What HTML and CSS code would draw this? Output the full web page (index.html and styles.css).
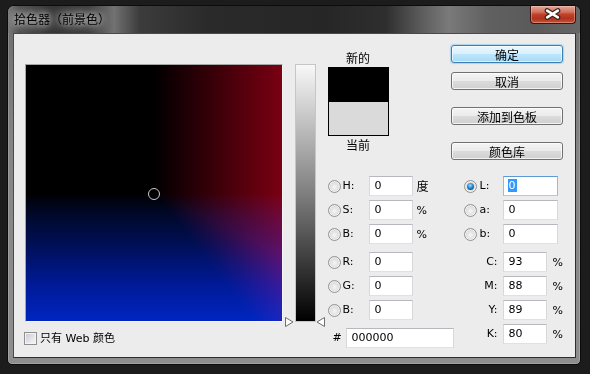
FILE: index.html
```html
<!DOCTYPE html>
<html lang="zh-CN">
<head>
<meta charset="utf-8">
<title>拾色器（前景色）</title>
<link rel="stylesheet" href="styles.css">
</head>
<body>
<div class="window">
  <div class="titlebar">
    <span class="title">拾色器（前景色）</span>
    <div class="close">
      <svg width="46" height="18" viewBox="0 0 46 18">
        <path d="M17.5 5.5 L28.5 12.5 M28.5 5.5 L17.5 12.5" stroke="#3a2220" stroke-width="5" stroke-linecap="round"/>
        <path d="M17.5 5.5 L28.5 12.5 M28.5 5.5 L17.5 12.5" stroke="#ffffff" stroke-width="2.6" stroke-linecap="round"/>
      </svg>
    </div>
  </div>
  <div class="client">
    <div class="pick">
      <div class="field">
        <div class="field-red"></div>
        <span class="marker"></span>
      </div>
      <div class="webonly"><span class="checkbox"></span><span>只有 Web 颜色</span></div>
    </div>
    <div class="slider">
      <svg class="tri tri-l" width="9" height="10" viewBox="0 0 9 10"><path d="M0.5 0.5 L8 5 L0.5 9.5 Z" fill="#fff" stroke="#6e6e6e"/></svg>
      <svg class="tri tri-r" width="9" height="10" viewBox="0 0 9 10"><path d="M8.5 0.5 L1 5 L8.5 9.5 Z" fill="#fff" stroke="#6e6e6e"/></svg>
    </div>
    <div class="panel">
      <div class="top">
        <div class="swatch-col">
          <div class="zh-label">新的</div>
          <div class="swatch"><div class="sw-new"></div><div class="sw-cur"></div></div>
          <div class="zh-label">当前</div>
        </div>
        <div class="buttons">
          <button class="btn btn-default">确定</button>
          <button class="btn">取消</button>
          <button class="btn">添加到色板</button>
          <button class="btn">颜色库</button>
        </div>
      </div>
      <div class="fields">
        <div class="col-left">
          <div class="row"><span class="radio"></span><span class="lbl">H:</span><span class="inp">0</span><span class="unit zh">度</span></div>
          <div class="row"><span class="radio"></span><span class="lbl">S:</span><span class="inp">0</span><span class="unit">%</span></div>
          <div class="row"><span class="radio"></span><span class="lbl">B:</span><span class="inp">0</span><span class="unit">%</span></div>
          <div class="row group"><span class="radio"></span><span class="lbl">R:</span><span class="inp">0</span></div>
          <div class="row"><span class="radio"></span><span class="lbl">G:</span><span class="inp">0</span></div>
          <div class="row"><span class="radio"></span><span class="lbl">B:</span><span class="inp">0</span></div>
          <div class="row group"><span class="hash">#</span><span class="inp inp-hex">000000</span></div>
        </div>
        <div class="col-right">
          <div class="row"><span class="radio on"><span class="dot"></span></span><span class="rlbl">L:</span><span class="inp inp-lab focus"><span class="sel">0</span></span></div>
          <div class="row"><span class="radio"></span><span class="rlbl">a:</span><span class="inp inp-lab">0</span></div>
          <div class="row"><span class="radio"></span><span class="rlbl">b:</span><span class="inp inp-lab">0</span></div>
          <div class="row group"><span class="clbl">C:</span><span class="inp">93</span><span class="cunit">%</span></div>
          <div class="row"><span class="clbl">M:</span><span class="inp">88</span><span class="cunit">%</span></div>
          <div class="row"><span class="clbl">Y:</span><span class="inp">89</span><span class="cunit">%</span></div>
          <div class="row"><span class="clbl">K:</span><span class="inp">80</span><span class="cunit">%</span></div>
        </div>
      </div>
    </div>
  </div>
</div>
</body>
</html>
```
FILE: styles.css
```css
html, body {
  margin: 0;
  padding: 0;
}
body {
  width: 590px;
  height: 374px;
  overflow: hidden;
  background: #1c1c1c;
  font: 11px "DejaVu Sans", "Noto Sans CJK SC", sans-serif;
  color: #000;
}

.window {
  margin: 5px 0 0 7px;
  width: 574px;
  height: 360px;
  box-sizing: border-box;
  border: 1px solid #0c0c0c;
  border-radius: 7px 7px 5px 5px;
  overflow: hidden;
  background: linear-gradient(to bottom, #6c6c6c 0%, #858585 40%, #8e8e8e 100%);
  box-shadow: inset 0 0 0 1px rgba(255,255,255,0.18);
  display: flex;
  flex-direction: column;
}

.titlebar {
  height: 27px;
  flex: none;
  display: flex;
  justify-content: space-between;
  align-items: flex-start;
  background: linear-gradient(to right, #7a7a7a 0%, #4e4e4e 2%, #333 7%, #3a3a3a 14%, #727272 18.5%, #3c3c3c 23%, #2a2a2a 35%, #262626 55%, #2e2e2e 66%, #5a5a5a 72%, #7a7a7a 77%, #606060 84%, #5a5a5a 92%, #676767 100%);
}
.title {
  margin: 6px 0 0 6px;
  font: 12px/14px "Noto Sans CJK SC", sans-serif;
  color: #000;
  text-shadow: 0 0 6px rgba(255,255,255,0.95), 0 0 12px rgba(255,255,255,0.7), 0 0 18px rgba(255,255,255,0.4);
}
.close {
  width: 46px;
  height: 18px;
  margin-right: 4px;
  box-sizing: border-box;
  border: 1px solid #3b1612;
  border-top: none;
  border-radius: 0 0 4px 4px;
  background: linear-gradient(to bottom, #e3a797 0%, #d2735e 35%, #c0412a 50%, #b1331f 75%, #c7533a 100%);
  box-shadow: inset 0 0 0 1px rgba(255,220,210,0.35);
  display: flex;
}
.close svg {
  margin: -1px 0 0 -1px;
}

.client {
  margin: 0 4px 6px 5px;
  height: 325px;
  box-sizing: border-box;
  border: 1px solid;
  border-color: #4a4a4a #2e2e2e #2e2e2e #4a4a4a;
  background: #ececec;
  display: flex;
  align-items: flex-start;
}

/* colour field */
.pick {
  margin: 30px 0 0 11px;
  width: 258px;
}
.field {
  position: relative;
  width: 256px;
  height: 256px;
  border: 1px solid;
  border-color: #a6a6a6 #f6f6f6 #f6f6f6 #a6a6a6;
  background: linear-gradient(to bottom, #000 50%, #000828 58%, #000f55 70%, #001a98 86%, #0026c0 100%);
}
.field-red {
  position: absolute;
  inset: 0;
  background: linear-gradient(to right, rgba(122,0,18,0) 50%, rgba(122,0,18,0.5) 75%, #7a0012 100%);
  mix-blend-mode: screen;
  -webkit-mask-image: conic-gradient(from 0deg at 50% 50%, #000 0deg, #000 92deg, rgba(0,0,0,0.75) 116deg, rgba(0,0,0,0.35) 130deg, transparent 142deg, transparent 180deg, #000 180deg);
  mask-image: conic-gradient(from 0deg at 50% 50%, #000 0deg, #000 92deg, rgba(0,0,0,0.75) 116deg, rgba(0,0,0,0.35) 130deg, transparent 142deg, transparent 180deg, #000 180deg);
}
.marker {
  position: absolute;
  left: 122px;
  top: 123px;
  width: 10px;
  height: 10px;
  border: 1px solid #c8c8c8;
  border-radius: 50%;
}

.webonly {
  display: flex;
  align-items: center;
  gap: 3px;
  margin: 10px 0 0 -1px;
  height: 13px;
  line-height: 13px;
}
.checkbox {
  width: 13px;
  height: 13px;
  box-sizing: border-box;
  border: 1px solid #8f8f8f;
  background: linear-gradient(135deg, #c3c7cd 0%, #e6e7ea 60%, #f8f8f8 100%);
  box-shadow: inset 0 0 0 1px #f4f4f4;
}

/* lightness slider */
.slider {
  position: relative;
  margin: 30px 0 0 12px;
  width: 19px;
  height: 256px;
  border: 1px solid #c6c6c6;
  background: linear-gradient(to bottom, #f8f8f8 0%, #7f7f7f 50%, #000 100%);
}
.tri {
  position: absolute;
  top: 252px;
}
.tri-l { left: -11px; }
.tri-r { left: 20px; }

/* right panel */
.panel {
  flex: 1;
  padding: 11px 12px 0 12px;
  display: flex;
  flex-direction: column;
}
.top {
  display: flex;
  justify-content: space-between;
  height: 115px;
}
.swatch-col {
  margin-top: 6px;
  width: 61px;
  text-align: center;
}
.zh-label {
  font: 12px/14px "Noto Sans CJK SC", sans-serif;
}
.swatch {
  margin: 2px 0;
  width: 59px;
  height: 67px;
  border: 1px solid #000;
  display: flex;
  flex-direction: column;
}
.sw-new { height: 34px; background: #000; }
.sw-cur { flex: 1; background: #dadada; }

.buttons {
  width: 112px;
  display: flex;
  flex-direction: column;
}
.btn {
  height: 18px;
  margin: 17px 0 0 0;
  padding: 0;
  box-sizing: border-box;
  border: 1px solid #707070;
  border-radius: 3px;
  background: linear-gradient(to bottom, #f4f4f4 0%, #ebebeb 50%, #dcdcdc 50%, #cfcfcf 100%);
  box-shadow: inset 0 0 0 1px rgba(255,255,255,0.75);
  font: 12px/15px "Noto Sans CJK SC", sans-serif;
  color: #000;
  text-align: center;
}
.btn-default {
  margin-top: 0;
  border-color: #3c7fb1;
  background: linear-gradient(to bottom, #eaf6fd 0%, #d9f0fc 50%, #bee6fd 50%, #a7d9f5 100%);
  box-shadow: inset 0 0 0 1px rgba(255,255,255,0.6), 0 0 1px 1px rgba(110,190,240,0.5);
}
.btn-default + .btn {
  margin-top: 9px;
}

.fields {
  margin-top: 16px;
  display: flex;
}
.col-left {
  width: 136px;
  display: flex;
  flex-direction: column;
  gap: 4px;
}
.col-right {
  flex: 1;
  display: flex;
  flex-direction: column;
  gap: 4px;
}
.row {
  display: flex;
  align-items: center;
  height: 20px;
}
.row.group {
  margin-top: 4px;
}
.radio {
  width: 13px;
  height: 13px;
  flex: none;
  box-sizing: border-box;
  border: 1px solid #939393;
  border-radius: 50%;
  background: radial-gradient(circle at 50% 55%, #f6f6f6 0%, #e2e2e2 45%, #cbcbcb 100%);
  box-shadow: inset 0 0 0 1px rgba(255,255,255,0.6);
  display: flex;
  align-items: center;
  justify-content: center;
}
.dot {
  width: 7px;
  height: 7px;
  border-radius: 50%;
  background: radial-gradient(circle at 45% 35%, #a9e1ff 0%, #3a9be0 35%, #145d97 70%, #0a3a63 100%);
}
.lbl {
  width: 26px;
  margin-left: 2px;
  line-height: 20px;
}
.rlbl {
  width: 23px;
  margin-left: 3px;
  line-height: 20px;
}
.clbl {
  width: 39px;
  box-sizing: border-box;
  padding-right: 5px;
  text-align: right;
  line-height: 20px;
}
.inp {
  width: 44px;
  height: 20px;
  flex: none;
  box-sizing: border-box;
  border: 1px solid;
  border-color: #b6b8bd #d6d8dc #dfe1e4 #d6d8dc;
  background: #fff;
  padding-left: 5px;
  line-height: 18px;
  color: #000;
}
.inp-lab {
  width: 55px;
}
.inp-hex {
  width: 108px;
}
.focus {
  border-color: #5a9bd5 #8ebde8 #a9cdef #8ebde8;
  padding-left: 4px;
}
.sel {
  display: inline-block;
  background: #3399ff;
  color: #fff;
  line-height: 13px;
  padding: 0 1px;
  vertical-align: middle;
  margin-top: -2px;
}
.unit {
  margin-left: 4px;
}
.unit.zh {
  font: 12px/14px "Noto Sans CJK SC", sans-serif;
}
.cunit {
  margin-left: 6px;
}
.hash {
  width: 18px;
  box-sizing: border-box;
  padding-left: 5px;
  line-height: 20px;
}
```
